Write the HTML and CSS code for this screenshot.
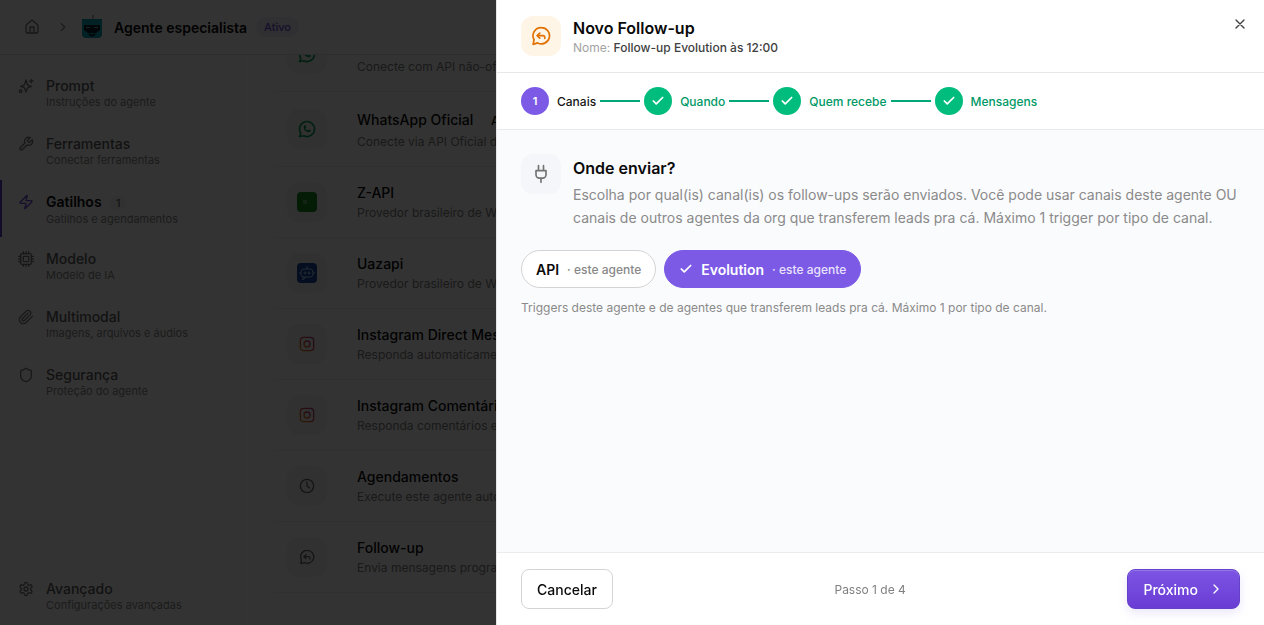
FILE: index.html
```html
<!DOCTYPE html>
<html lang="pt-BR">
<head>
    <meta charset="UTF-8" />
    <meta name="viewport" content="width=device-width, initial-scale=1.0" />
    <title>Novo Follow-up</title>
    <link rel="stylesheet" href="styles.css">
</head>
<body>
    <!-- Shared icons -->
    <svg class="sprite" aria-hidden="true">
        <defs>
            <linearGradient id="insta" x1="0" y1="1" x2="1" y2="0">
                <stop offset="0" stop-color="#d98a1b" />
                <stop offset="0.5" stop-color="#d94a3a" />
                <stop offset="1" stop-color="#a83a8a" />
            </linearGradient>
        </defs>
        <symbol id="i-check" viewBox="0 0 24 24"><path d="M20 6 9 17l-5-5" /></symbol>
        <symbol id="i-chevron" viewBox="0 0 24 24"><path d="m9 18 6-6-6-6" /></symbol>
        <symbol id="i-reply" viewBox="0 0 24 24">
            <path d="M12.500 2a9.700 9.700 0 1 1-4.500 18.300L2.500 22l1.200-5.500A9.700 9.700 0 0 1 12.500 2z" />
            <path d="m10.500 14.500-3-3 3-3" />
            <path d="M7.500 11.500h7a2 2 0 0 1 2 2v1.500" />
        </symbol>
        <symbol id="i-whatsapp" viewBox="0 0 24 24">
            <path d="M3 21l1.65-3.8a9 9 0 1 1 3.4 2.9L3 21" />
            <path d="M9 10a.5.5 0 0 0 1 0V9a.5.5 0 0 0-1 0v1a5 5 0 0 0 5 5h1a.5.5 0 0 0 0-1h-1a.5.5 0 0 0 0 1" />
        </symbol>
        <symbol id="i-instagram" viewBox="0 0 24 24">
            <rect x="2" y="2" width="20" height="20" rx="5" />
            <circle cx="12" cy="12" r="4.5" />
            <path d="M17.5 6.5h.01" />
        </symbol>
    </svg>

    <div class="app">
        <header class="topbar">
            <a class="home" href="#" aria-label="Início">
                <svg class="icon" viewBox="0 0 24 24"><path d="M15 21v-8a1 1 0 0 0-1-1h-4a1 1 0 0 0-1 1v8" /><path d="M3 10a2 2 0 0 1 .7-1.5l7-6a2 2 0 0 1 2.6 0l7 6A2 2 0 0 1 21 10v9a2 2 0 0 1-2 2H5a2 2 0 0 1-2-2z" /></svg>
            </a>
            <svg class="icon crumb"><use href="#i-chevron" /></svg>
            <svg class="avatar" viewBox="0 0 20 24">
                <path d="M11 0v5" stroke="#777" />
                <path d="M0 4h20v15q0 4-4 4H4q-4 0-4-4z" fill="#0aa5b5" />
                <path d="M2 10h16v5l-4 3H6l-4-3z" fill="#0b1f2a" />
                <path d="M4 12.500h4M12 12.500h4" stroke="#5cb6be" />
                <path d="M7 19q3 3 6 0" stroke="#0b1f2a" stroke-width="2" fill="none" />
            </svg>
            <span class="agent-name">Agente especialista</span>
            <span class="status">Ativo</span>
        </header>

        <div class="workspace">
            <nav class="sidebar">
                <a class="nav-item" href="#">
                    <svg class="icon" viewBox="0 0 24 24"><path d="M9.9 15.500A2 2 0 0 0 8.500 14.100L4 12.500l4.500-1.600A2 2 0 0 0 9.900 9.500L12 3l2.100 6.500a2 2 0 0 0 1.400 1.400l4.500 1.600-4.500 1.600a2 2 0 0 0-1.400 1.400L12 21z" /><path d="M20 2v5M22.500 4.500h-5" /><circle cx="4" cy="20" r="2" /></svg>
                    <span><strong>Prompt</strong><small>Instruções do agente</small></span>
                </a>
                <a class="nav-item" href="#">
                    <svg class="icon" viewBox="0 0 24 24"><path d="M14.700 6.300a1 1 0 0 0 0 1.400l1.600 1.600a1 1 0 0 0 1.400 0l3.770-3.770a6 6 0 0 1-7.940 7.940l-6.910 6.910a2.120 2.120 0 0 1-3-3l6.910-6.910a6 6 0 0 1 7.940-7.940z" /></svg>
                    <span><strong>Ferramentas</strong><small>Conectar ferramentas</small></span>
                </a>
                <a class="nav-item active" href="#">
                    <svg class="icon" viewBox="0 0 24 24"><path d="M4 14a1 1 0 0 1-.78-1.630l9.900-10.200a.5.5 0 0 1 .86.46l-1.920 6.020A1 1 0 0 0 13 10h7a1 1 0 0 1 .78 1.630l-9.900 10.200a.5.5 0 0 1-.86-.46l1.920-6.020A1 1 0 0 0 11 14z" /></svg>
                    <span><strong>Gatilhos <em>1</em></strong><small>Gatilhos e agendamentos</small></span>
                </a>
                <a class="nav-item" href="#">
                    <svg class="icon" viewBox="0 0 24 24"><rect x="4" y="4" width="16" height="16" rx="2" /><rect x="8" y="8" width="8" height="8" rx="1" /><path d="M8 1v3M12 1v3M16 1v3M8 20v3M12 20v3M16 20v3M1 8h3M1 12h3M1 16h3M20 8h3M20 12h3M20 16h3" /></svg>
                    <span><strong>Modelo</strong><small>Modelo de IA</small></span>
                </a>
                <a class="nav-item" href="#">
                    <svg class="icon" viewBox="0 0 24 24"><path d="m21.440 11.050-9.190 9.190a6 6 0 0 1-8.490-8.490l8.570-8.570A4 4 0 1 1 18 8.840l-8.590 8.570a2 2 0 0 1-2.830-2.830l8.490-8.480" /></svg>
                    <span><strong>Multimodal</strong><small>Imagens, arquivos e áudios</small></span>
                </a>
                <a class="nav-item" href="#">
                    <svg class="icon" viewBox="0 0 24 24"><path d="M20 13c0 5-3.500 7.500-7.660 8.950a1 1 0 0 1-.67-.01C7.500 20.500 4 18 4 13V6a1 1 0 0 1 1-1c2 0 4.500-1.200 6.240-2.720a1.170 1.170 0 0 1 1.520 0C14.510 3.810 17 5 19 5a1 1 0 0 1 1 1z" /></svg>
                    <span><strong>Segurança</strong><small>Proteção do agente</small></span>
                </a>
                <a class="nav-item last" href="#">
                    <svg class="icon" viewBox="0 0 24 24"><path d="M12.220 2h-.44a2 2 0 0 0-2 2v.18a2 2 0 0 1-1 1.730l-.43.25a2 2 0 0 1-2 0l-.15-.08a2 2 0 0 0-2.730.73l-.22.38a2 2 0 0 0 .73 2.730l.15.1a2 2 0 0 1 1 1.720v.51a2 2 0 0 1-1 1.740l-.15.09a2 2 0 0 0-.73 2.730l.22.38a2 2 0 0 0 2.730.73l.15-.08a2 2 0 0 1 2 0l.43.25a2 2 0 0 1 1 1.730V20a2 2 0 0 0 2 2h.44a2 2 0 0 0 2-2v-.18a2 2 0 0 1 1-1.730l.43-.25a2 2 0 0 1 2 0l.15.08a2 2 0 0 0 2.730-.73l.22-.39a2 2 0 0 0-.73-2.730l-.15-.08a2 2 0 0 1-1-1.740v-.5a2 2 0 0 1 1-1.740l.15-.09a2 2 0 0 0 .73-2.730l-.22-.38a2 2 0 0 0-2.730-.73l-.15.08a2 2 0 0 1-2 0l-.43-.25a2 2 0 0 1-1-1.730V4a2 2 0 0 0-2-2z" /><circle cx="12" cy="12" r="3" /></svg>
                    <span><strong>Avançado</strong><small>Configurações avançadas</small></span>
                </a>
            </nav>

            <main class="triggers">
                <ul>
                    <li class="tall scrolled">
                        <span class="badge-icon green"><svg class="icon"><use href="#i-whatsapp" /></svg></span>
                        <div><p>Conecte com API não-oficial do WhatsApp</p></div>
                    </li>
                    <li class="tall">
                        <span class="badge-icon green"><svg class="icon"><use href="#i-whatsapp" /></svg></span>
                        <div><h3>WhatsApp Oficial <em>API Oficial</em></h3><p>Conecte via API Oficial do WhatsApp</p></div>
                    </li>
                    <li>
                        <span class="badge-icon">
                            <svg class="logo" viewBox="0 0 20 20"><rect width="20" height="20" rx="4" fill="#168a1c" /><path d="M6 8h4v4H6z" fill="#5cb360" /><path d="M11 8h3M11 11h2" stroke="#2f9635" /></svg>
                        </span>
                        <div><h3>Z-API</h3><p>Provedor brasileiro de WhatsApp</p></div>
                    </li>
                    <li>
                        <span class="badge-icon">
                            <svg class="logo" viewBox="0 0 20 20"><rect width="20" height="20" rx="4" fill="#15489f" /><g fill="none" stroke="#a9cdf5"><rect x="4" y="6" width="12" height="8" rx="3" /><path d="M10 6V3M4 10H2M18 10h-2M6 14v3l3-3" /><circle cx="8" cy="10" r="1" /><circle cx="12" cy="10" r="1" /></g></svg>
                        </span>
                        <div><h3>Uazapi</h3><p>Provedor brasileiro de WhatsApp</p></div>
                    </li>
                    <li>
                        <span class="badge-icon insta"><svg class="icon"><use href="#i-instagram" /></svg></span>
                        <div><h3>Instagram Direct Message</h3><p>Responda automaticamente mensagens</p></div>
                    </li>
                    <li>
                        <span class="badge-icon insta"><svg class="icon"><use href="#i-instagram" /></svg></span>
                        <div><h3>Instagram Comentários</h3><p>Responda comentários em publicações</p></div>
                    </li>
                    <li>
                        <span class="badge-icon"><svg class="icon" viewBox="0 0 24 24"><circle cx="12" cy="12" r="10" /><path d="M12 6v6l4 3" /></svg></span>
                        <div><h3>Agendamentos</h3><p>Execute este agente automaticamente</p></div>
                    </li>
                    <li>
                        <span class="badge-icon"><svg class="icon"><use href="#i-reply" /></svg></span>
                        <div><h3>Follow-up</h3><p>Envia mensagens programadas</p></div>
                    </li>
                </ul>
            </main>
        </div>
    </div>

    <div class="overlay">
        <section class="drawer" role="dialog" aria-modal="true" aria-labelledby="drawer-title">
            <header class="drawer-header">
                <span class="tile orange"><svg class="icon"><use href="#i-reply" /></svg></span>
                <div class="drawer-heading">
                    <h1 id="drawer-title">Novo Follow-up</h1>
                    <p>Nome: <span>Follow-up Evolution às 12:00</span></p>
                </div>
                <button type="button" class="close" aria-label="Fechar">
                    <svg class="icon" viewBox="0 0 24 24"><path d="M18 6 6 18M6 6l12 12" /></svg>
                </button>
            </header>

            <ol class="steps">
                <li class="current"><span class="dot">1</span>Canais</li>
                <li><span class="dot"><svg class="icon"><use href="#i-check" /></svg></span>Quando</li>
                <li><span class="dot"><svg class="icon"><use href="#i-check" /></svg></span>Quem recebe</li>
                <li><span class="dot"><svg class="icon"><use href="#i-check" /></svg></span>Mensagens</li>
            </ol>

            <div class="drawer-body">
                <div class="intro">
                    <span class="tile"><svg class="icon" viewBox="0 0 24 24"><path d="M12 22v-5M9 8V2M15 8V2M18 8v5a4 4 0 0 1-4 4h-4a4 4 0 0 1-4-4V8Z" /></svg></span>
                    <div>
                        <h2>Onde enviar?</h2>
                        <p>Escolha por qual(is) canal(is) os follow-ups serão enviados. Você pode usar canais deste agente OU canais de outros agentes da org que transferem leads pra cá. Máximo 1 trigger por tipo de canal.</p>
                    </div>
                </div>
                <div class="chips">
                    <button type="button" class="chip" aria-pressed="false">API <small>· este agente</small></button>
                    <button type="button" class="chip selected" aria-pressed="true">
                        <svg class="icon"><use href="#i-check" /></svg>Evolution <small>· este agente</small>
                    </button>
                </div>
                <p class="hint">Triggers deste agente e de agentes que transferem leads pra cá. Máximo 1 por tipo de canal.</p>
            </div>

            <footer class="drawer-footer">
                <button type="button" class="btn">Cancelar</button>
                <span>Passo 1 de 4</span>
                <button type="button" class="btn primary">Próximo <svg class="icon"><use href="#i-chevron" /></svg></button>
            </footer>
        </section>
    </div>
</body>
</html>
```
FILE: styles.css
```css
* {
    box-sizing: border-box;
}
body {
    margin: 0;
    font-family: Inter, "Liberation Sans", sans-serif;
    font-size: 14px;
    color: #0a0a0a;
    background: #fff;
}
h1, h2, h3, p, ul, ol {
    margin: 0;
    padding: 0;
}
ul, ol {
    list-style: none;
}
a {
    color: inherit;
    text-decoration: none;
}
button {
    font-family: inherit;
    cursor: pointer;
}
.sprite {
    position: absolute;
    width: 0;
    height: 0;
}
.icon {
    width: 16px;
    height: 16px;
    flex-shrink: 0;
    fill: none;
    stroke: currentColor;
    stroke-width: 2;
    stroke-linecap: round;
    stroke-linejoin: round;
}

/* Page behind the drawer */
.app {
    height: 100vh;
    display: flex;
    flex-direction: column;
    overflow: hidden;
}
.topbar {
    height: 55px;
    flex-shrink: 0;
    display: flex;
    align-items: center;
    padding: 0 24px;
    border-bottom: 1px solid #e0e0e0;
}
.home {
    display: flex;
    color: #777;
}
.crumb {
    margin: 0 10px 0 16px;
    color: #888;
    width: 14px;
    height: 14px;
}
.avatar {
    width: 20px;
    height: 24px;
    margin: 0 12px 0 2px;
}
.agent-name {
    font-size: 14px;
    font-weight: 600;
}
.status {
    margin-left: 9px;
    padding: 2px 8px;
    border-radius: 10px;
    font-size: 11px;
    line-height: 16px;
    font-weight: 500;
    color: #6d4fd8;
    background: #efecfb;
}
.workspace {
    flex: 1;
    min-height: 0;
    display: flex;
}
.sidebar {
    width: 241px;
    flex-shrink: 0;
    display: flex;
    flex-direction: column;
    padding: 9px 0 0;
    border-right: 1px solid #fafafa;
}
.nav-item {
    display: flex;
    gap: 12px;
    height: 57px;
    margin-bottom: 1px;
    padding: 13px 16px 0;
    border-left: 2px solid transparent;
    color: #777;
}
.nav-item .icon {
    margin-top: 1px;
}
.nav-item strong, .nav-item small {
    display: block;
    line-height: 18px;
}
.nav-item strong {
    font-size: 14px;
    font-weight: 500;
    color: #5c5c5c;
}
.nav-item small {
    font-size: 11px;
    line-height: 14px;
    color: #8a8a8a;
}
.nav-item.active {
    margin-bottom: 0;
    border-color: #5b3ccb;
}
.nav-item.active .icon {
    color: #6d4fd8;
}
.nav-item.active strong {
    font-weight: 600;
    color: #0a0a0a;
}
.nav-item em {
    margin-left: 5px;
    padding: 1px 6px;
    border-radius: 8px;
    font-size: 10px;
    font-style: normal;
    font-weight: 500;
    background: #f6f5fa;
    color: #555;
}
.nav-item.last {
    margin-top: auto;
}
.triggers {
    flex: 1;
    min-width: 0;
    display: flex;
    flex-direction: column;
    justify-content: flex-end;
    overflow: hidden;
    padding: 0 34px 32px;
}
.triggers li {
    display: flex;
    align-items: center;
    gap: 30px;
    height: 71px;
    padding: 0 12px;
    border-bottom: 1px solid #eee;
    white-space: nowrap;
}
.triggers li.tall {
    height: 75px;
}
.badge-icon {
    width: 40px;
    height: 40px;
    flex-shrink: 0;
    display: flex;
    align-items: center;
    justify-content: center;
    border-radius: 12px;
    background: #f4f6f9;
    color: #666;
}
.badge-icon.green {
    color: #0a9e5c;
}
.badge-icon.green .icon {
    width: 20px;
    height: 20px;
}
.badge-icon.insta .icon {
    stroke: url(#insta);
}
.logo {
    width: 20px;
    height: 20px;
}
.triggers h3 {
    padding-top: 2px;
    font-size: 14px;
    line-height: 20px;
    font-weight: 500;
}
.triggers h3 em {
    margin-left: 6px;
    padding: 0 8px;
    font-size: 12px;
    font-style: normal;
}
.triggers p {
    font-size: 12px;
    line-height: 20px;
    color: #808080;
}
.tall h3 {
    line-height: 22px;
}
/* title is scrolled away under the top bar */
.scrolled p {
    padding-top: 26px;
}

/* Drawer */
.overlay {
    position: fixed;
    inset: 0;
    display: flex;
    justify-content: flex-end;
    background: rgba(0, 0, 0, 0.8);
}
.drawer {
    width: 100%;
    max-width: 768px;
    display: flex;
    flex-direction: column;
    border-left: 1px solid #e5e5e5;
    background: #fff;
}
.drawer-header {
    display: flex;
    gap: 12px;
    padding: 16px 16px 16px 24px;
    border-bottom: 1px solid #e8e8ea;
}
.tile {
    width: 40px;
    height: 40px;
    flex-shrink: 0;
    display: flex;
    align-items: center;
    justify-content: center;
    border-radius: 12px;
    background: #f5f6f9;
    color: #737373;
}
.tile .icon {
    width: 20px;
    height: 20px;
}
.tile.orange {
    background: #fff5e6;
    color: #e17100;
}
.drawer-heading {
    flex: 1;
}
.drawer h1, .drawer h2 {
    font-size: 16px;
    line-height: 24px;
    font-weight: 600;
}
.drawer-heading p {
    font-size: 12px;
    line-height: 16px;
    color: #a3a3a3;
}
.drawer-heading p span {
    font-weight: 500;
    color: #404040;
}
.close {
    width: 16px;
    height: 16px;
    padding: 0;
    border: 0;
    background: none;
    color: #404040;
}
.steps {
    display: flex;
    align-items: center;
    padding: 14px 24px;
    border-bottom: 1px solid #e8eaee;
    font-size: 12px;
    font-weight: 500;
    color: #009966;
}
.steps li {
    display: flex;
    align-items: center;
}
.steps li + li::before {
    content: "";
    width: 40px;
    height: 2px;
    margin: 0 4px;
    background: #00a878;
}
.steps .current {
    color: #171717;
}
.dot {
    width: 28px;
    height: 28px;
    margin-right: 8px;
    display: flex;
    align-items: center;
    justify-content: center;
    border-radius: 50%;
    font-size: 11px;
    font-weight: 600;
    background: #00bc7d;
    color: #fff;
}
.current .dot {
    background: #7c5ae6;
}
.dot .icon {
    width: 14px;
    height: 14px;
    stroke-width: 3;
}
.drawer-body {
    flex: 1;
    min-height: 0;
    overflow: auto;
    padding: 24px;
    background: #fafbfd;
}
.intro {
    display: flex;
    gap: 12px;
}
.intro h2 {
    line-height: 29px;
}
.intro p {
    font-size: 14px;
    line-height: 23px;
    color: #8a8a8a;
}
.chips {
    display: flex;
    gap: 8px;
    margin: 21px 0 12px;
}
.chip {
    height: 38px;
    display: flex;
    align-items: center;
    gap: 8px;
    padding: 0 14px;
    border: 1px solid #d4d4d4;
    border-radius: 19px;
    background: #fff;
    font-size: 14px;
    font-weight: 600;
    color: #0a0a0a;
}
.chip small {
    font-size: 12px;
    font-weight: 500;
    color: #888;
}
.chip.selected {
    border-color: #7c5ae6;
    background: #7c5ae6;
    color: #fff;
}
.chip.selected small {
    color: #e9e2fb;
}
.chip .icon {
    width: 14px;
    height: 14px;
    stroke-width: 3;
}
.hint {
    font-size: 12px;
    line-height: 16px;
    color: #8a8a8a;
}
.drawer-footer {
    display: flex;
    align-items: center;
    justify-content: space-between;
    padding: 16px 24px;
    border-top: 1px solid #ececee;
    font-size: 12px;
    color: #808080;
}
.btn {
    height: 40px;
    display: flex;
    align-items: center;
    gap: 10px;
    padding: 0 15px;
    border: 1px solid #d4d4d4;
    border-radius: 8px;
    background: #fff;
    font-size: 14px;
    font-weight: 500;
    color: #0a0a0a;
}
.btn.primary {
    border-color: #6540c8;
    background: linear-gradient(#7c55e4, #6a3cd4);
    box-shadow: 0 4px 10px rgba(124, 90, 230, 0.15), inset 0 1px 0 rgba(255, 255, 255, 0.2);
    color: #fff;
}
```
